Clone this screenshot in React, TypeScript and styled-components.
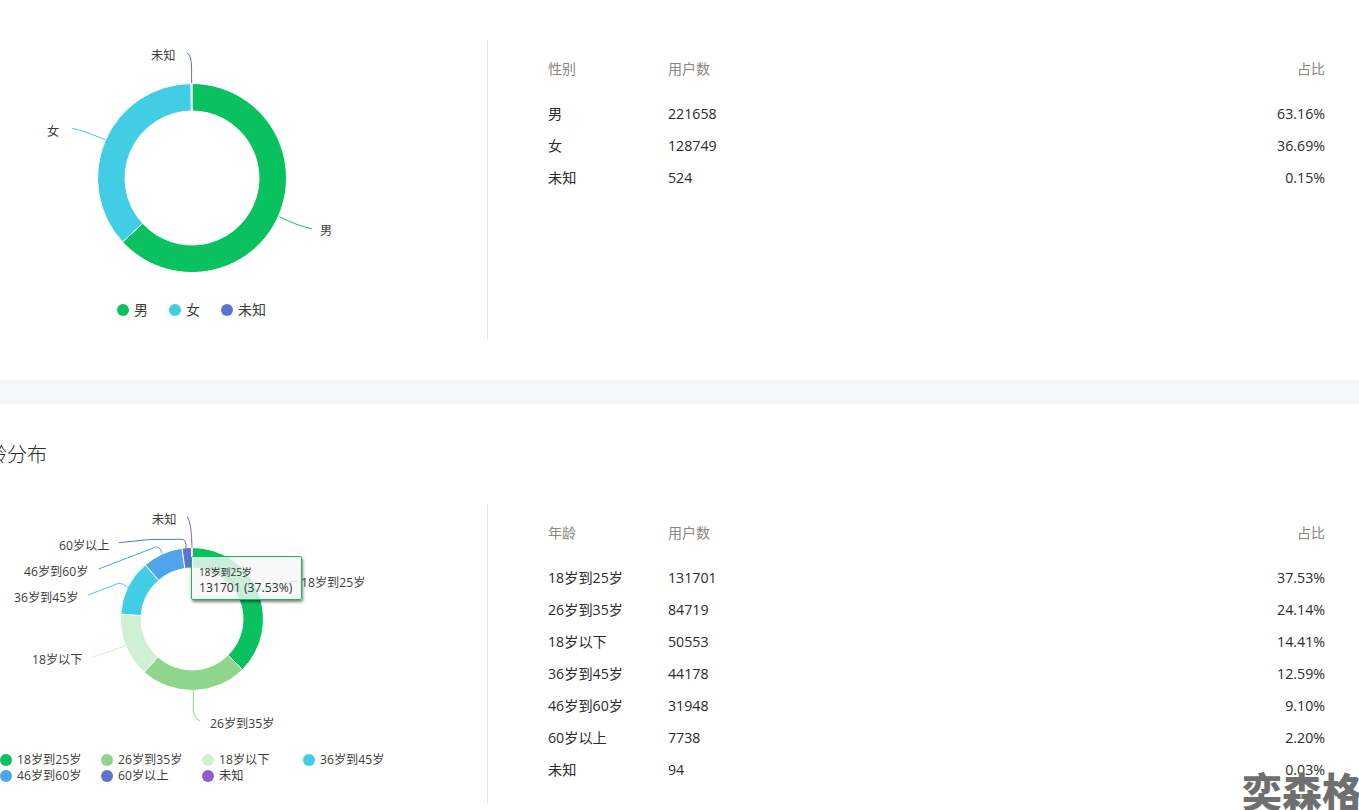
import React from "react";
import styled, { createGlobalStyle } from "styled-components";

const Global = createGlobalStyle`
  html, body { margin: 0; padding: 0; background: #fff; }
  body { font-family: "Open Sans", "Noto Sans CJK SC", sans-serif; color: #333; overflow: hidden; }
`;

const Page = styled.div`
  position: relative;
  width: 1359px;
  height: 810px;
  overflow: hidden;
  background: #fff;
`;
const Section = styled.section<{ $pad: number }>`
  padding-top: ${(p) => p.$pad}px;
`;
const Band = styled.div`
  height: 24px;
  margin-top: 40px;
  background: #f5f6f8;
`;
const Title = styled.h2`
  margin: 0 0 35px -33px;
  padding-top: 1px;
  height: 28px;
  font-size: 20px;
  line-height: 28px;
  font-weight: 300;
  color: #2b2b2b;
  white-space: nowrap;
`;
const Row = styled.div`
  display: flex;
  height: 300px;
`;
const ChartPanel = styled.div`
  position: relative;
  flex: 0 0 488px;
  height: 300px;
  box-sizing: border-box;
  border-right: 1px solid #e6e6e6;
`;
const ChartSvg = styled.svg<{ $h: number }>`
  display: block;
  width: 487px;
  height: ${(p) => p.$h}px;
`;
const Label = styled.text`
  font-size: 12.2px;
  fill: #3c3c3c;
  font-family: "Open Sans", "Noto Sans CJK SC", sans-serif;
`;
const Legend = styled.div`
  display: flex;
  padding-left: 117px;
  gap: 21px;
  margin-top: 6px;
`;
const LegendItem = styled.div`
  display: flex;
  align-items: center;
  gap: 5px;
  font-size: 14px;
  line-height: 18px;
  color: #3c3c3c;
`;
const Dot = styled.i<{ $c: string }>`
  display: block;
  width: 12px;
  height: 12px;
  border-radius: 50%;
  background: ${(p) => p.$c};
`;
const GridLegend = styled.div`
  display: grid;
  grid-template-columns: repeat(4, 101px);
  grid-auto-rows: 16px;
`;
const GridItem = styled.div`
  display: flex;
  align-items: center;
  gap: 5px;
  font-size: 12.2px;
  line-height: 16px;
  color: #3c3c3c;
  white-space: nowrap;
`;
const Tooltip = styled.div`
  position: absolute;
  left: 191px;
  top: 52px;
  width: 111px;
  height: 44px;
  box-sizing: border-box;
  padding: 9px 7px 0;
  background: rgba(247, 247, 247, 0.82);
  border: 1px solid #09c25f;
  border-radius: 2px;
  box-shadow: 1px 2px 3px rgba(0, 0, 0, 0.5);
  color: #333;
  white-space: nowrap;
`;
const TipTitle = styled.div`
  font-size: 10px;
  line-height: 13px;
`;
const TipValue = styled.div`
  font-size: 12.2px;
  line-height: 17px;
`;
const TablePanel = styled.div`
  flex: 1;
  padding: 19px 34px 0 60px;
`;
const Table = styled.div`
  display: grid;
  grid-template-columns: 120px 1fr auto;
  grid-template-rows: 39px;
  grid-auto-rows: 32px;
  align-items: center;
  font-size: 14.2px;
  color: #2b2b2b;
`;
const Head = styled.div<{ $right?: boolean }>`
  height: 20px;
  line-height: 20px;
  color: #8c8582;
  font-size: 14px;
  text-align: ${(p) => (p.$right ? "right" : "left")};
  align-self: start;
`;
const Cell = styled.div<{ $right?: boolean }>`
  line-height: 20px;
  text-align: ${(p) => (p.$right ? "right" : "left")};
`;
const Watermark = styled.div`
  position: absolute;
  right: -3px;
  bottom: -5px;
  font-family: "Noto Sans CJK SC", sans-serif;
  font-weight: 900;
  font-size: 40px;
  line-height: 50px;
  color: #6f6f6f;
`;

const C = {
  green: "#09c25f",
  cyan: "#41cde3",
  indigo: "#5e72d2",
  lgreen: "#8fd68c",
  pale: "#d0f0d3",
  blue: "#4fa4ec",
  purple: "#8c5ed2",
};

type Seg = { v: number; c: string };

function arc(cx: number, cy: number, R: number, r: number, a0: number, a1: number) {
  const p = (rad: number, a: number) => `${cx + rad * Math.sin(a)} ${cy - rad * Math.cos(a)}`;
  const large = a1 - a0 > Math.PI ? 1 : 0;
  return `M${p(R, a0)}A${R} ${R} 0 ${large} 1 ${p(R, a1)}L${p(r, a1)}A${r} ${r} 0 ${large} 0 ${p(r, a0)}Z`;
}

function Donut({ cx, cy, R, r, segs }: { cx: number; cy: number; R: number; r: number; segs: Seg[] }) {
  let acc = 0;
  return (
    <g stroke="#fff" strokeWidth="1">
      {segs.map((s, i) => {
        const a0 = (acc / 100) * 2 * Math.PI;
        acc += s.v;
        const a1 = (acc / 100) * 2 * Math.PI;
        return <path key={i} d={arc(cx, cy, R, r, a0, a1)} fill={s.c} />;
      })}
    </g>
  );
}

const Lead = ({ d, c }: { d: string; c: string }) => <path d={d} fill="none" stroke={c} strokeWidth="1" />;

type Rowd = [string, string, string];
const gender: Rowd[] = [
  ["男", "221658", "63.16%"],
  ["女", "128749", "36.69%"],
  ["未知", "524", "0.15%"],
];
const age: Rowd[] = [
  ["18岁到25岁", "131701", "37.53%"],
  ["26岁到35岁", "84719", "24.14%"],
  ["18岁以下", "50553", "14.41%"],
  ["36岁到45岁", "44178", "12.59%"],
  ["46岁到60岁", "31948", "9.10%"],
  ["60岁以上", "7738", "2.20%"],
  ["未知", "94", "0.03%"],
];

function DataTable({ head, rows }: { head: string; rows: Rowd[] }) {
  return (
    <Table>
      <Head>{head}</Head>
      <Head>用户数</Head>
      <Head $right>占比</Head>
      {rows.map((r) => (
        <React.Fragment key={r[0]}>
          <Cell>{r[0]}</Cell>
          <Cell>{r[1]}</Cell>
          <Cell $right>{r[2]}</Cell>
        </React.Fragment>
      ))}
    </Table>
  );
}

const ageLegend: [string, string][] = [
  ["18岁到25岁", C.green],
  ["26岁到35岁", C.lgreen],
  ["18岁以下", C.pale],
  ["36岁到45岁", C.cyan],
  ["46岁到60岁", C.blue],
  ["60岁以上", C.indigo],
  ["未知", C.purple],
];

export default function App() {
  return (
    <Page>
      <Global />
      <Section $pad={40}>
        <Row>
          <ChartPanel>
            <ChartSvg $h={255} viewBox="0 40 487 255">
              <Donut
                cx={192}
                cy={178}
                R={94.5}
                r={67}
                segs={[
                  { v: 63.16, c: C.green },
                  { v: 36.69, c: C.cyan },
                  { v: 0.15, c: C.indigo },
                ]}
              />
              <Lead d="M191.6 83V67Q191.3 54 186.5 52.7" c={C.indigo} />
              <Lead d="M105.7 140Q85 131 72.3 128.3" c={C.cyan} />
              <Lead d="M279.3 216.7Q298 226 311.7 228.7" c={C.green} />
              <Label x="151" y="60">未知</Label>
              <Label x="47" y="136">女</Label>
              <Label x="320" y="235">男</Label>
            </ChartSvg>
            <Legend>
              <LegendItem><Dot $c={C.green} />男</LegendItem>
              <LegendItem><Dot $c={C.cyan} />女</LegendItem>
              <LegendItem><Dot $c={C.indigo} />未知</LegendItem>
            </Legend>
          </ChartPanel>
          <TablePanel>
            <DataTable head="性别" rows={gender} />
          </TablePanel>
        </Row>
      </Section>
      <Band />
      <Section $pad={36}>
        <Title>年龄分布</Title>
        <Row>
          <ChartPanel>
            <ChartSvg $h={248} viewBox="0 504 487 248">
              <Donut
                cx={192}
                cy={619}
                R={71.5}
                r={51}
                segs={[
                  { v: 37.53, c: C.green },
                  { v: 24.14, c: C.lgreen },
                  { v: 14.41, c: C.pale },
                  { v: 12.59, c: C.cyan },
                  { v: 9.1, c: C.blue },
                  { v: 2.2, c: C.indigo },
                  { v: 0.03, c: C.purple },
                ]}
              />
              <Lead d="M258 591Q275 583 298 581" c={C.green} />
              <Lead d="M193.3 690.3V710Q194 719 200 720.7" c={C.lgreen} />
              <Lead d="M125.7 645.7L92.3 657.3" c={C.pale} />
              <Lead d="M127.7 587.3Q124 583 118.3 583.3L88.3 595" c={C.cyan} />
              <Lead d="M162.3 553.3Q160 547 156.7 546.7L98.7 569" c={C.blue} />
              <Lead d="M186 548Q186.5 539.5 182 539.3Q150 538 119 542.7" c={C.indigo} />
              <Lead d="M192 547.5Q191.5 522 187.3 516.7" c={C.purple} />
              <Label x="152" y="524">未知</Label>
              <Label x="59" y="550">60岁以上</Label>
              <Label x="24" y="576">46岁到60岁</Label>
              <Label x="14" y="602">36岁到45岁</Label>
              <Label x="32" y="664">18岁以下</Label>
              <Label x="210" y="728">26岁到35岁</Label>
              <Label x="301" y="587">18岁到25岁</Label>
            </ChartSvg>
            <GridLegend>
              {ageLegend.map(([t, c]) => (
                <GridItem key={t}><Dot $c={c} />{t}</GridItem>
              ))}
            </GridLegend>
            <Tooltip>
              <TipTitle>18岁到25岁</TipTitle>
              <TipValue>131701 (37.53%)</TipValue>
            </Tooltip>
          </ChartPanel>
          <TablePanel>
            <DataTable head="年龄" rows={age} />
          </TablePanel>
        </Row>
      </Section>
      <Watermark>奕森格</Watermark>
    </Page>
  );
}
